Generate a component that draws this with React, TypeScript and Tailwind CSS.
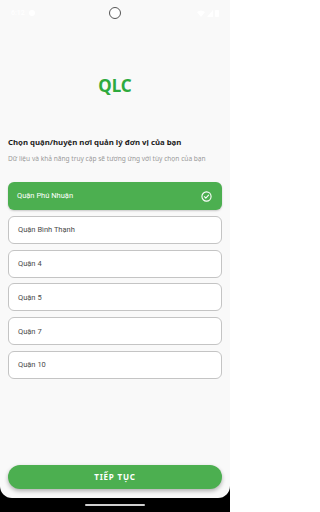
import React from "react";

const districts = ["Quận Phú Nhuận", "Quận Bình Thạnh", "Quận 4", "Quận 5", "Quận 7", "Quận 10"];

export default function App() {
  const selected = 0;
  return (
    <div className="w-[230px] h-[512px] bg-black overflow-hidden" style={{ fontFamily: '"Noto Sans", sans-serif' }}>
      <div className="relative w-[230px] h-[498px] bg-[#f9f9f9] rounded-b-[12px] flex flex-col">
        {/* status bar */}
        <div className="relative h-[26px] flex items-center justify-between px-[11px] text-white">
          <div className="flex items-center gap-[4px] text-[7px] font-medium" style={{ fontFamily: 'Roboto, sans-serif' }}>
            <span>6:12</span>
            <span className="w-[6px] h-[6px] rounded-full bg-white inline-block" />
          </div>
          <div className="absolute left-[109px] top-[7px] w-[12px] h-[12px] rounded-full border border-[#555] bg-white" />
          <div className="flex items-center gap-[2px]">
            <svg width="8" height="7" viewBox="0 0 8 7"><path d="M0 2 Q4 -1 8 2 L4 7 Z" fill="white" /></svg>
            <svg width="6" height="7" viewBox="0 0 6 7"><path d="M0 7 L6 0 L6 7 Z" fill="white" /></svg>
            <div className="w-[4px] h-[7px] bg-white rounded-[1px]" />
          </div>
        </div>

        <div className="h-[44px]" />
        <div className="text-center text-[17px] font-bold text-[#2eaa3e] leading-[32px]">QLC</div>

        <div className="h-[34px]" />
        <div className="px-[8px]">
          <div className="text-[7.8px] font-bold text-[#1c1c1c] leading-[12px]">Chọn quận/huyện nơi quản lý đơn vị của bạn</div>
          <div className="mt-[6px] text-[6.6px] text-[#9a9a9a] leading-[10px] whitespace-nowrap">
            Dữ liệu và khả năng truy cập sẽ tương ứng với tùy chọn của bạn
          </div>
        </div>

        <div className="mt-[18px] px-[8px] flex flex-col gap-[5.8px]">
          {districts.map((d, i) =>
            i === selected ? (
              <div key={d} className="h-[28px] rounded-[6px] bg-[#4caf50] flex items-center justify-between pl-[9px] pr-[10px] shadow-[0_1px_2px_rgba(0,0,0,0.2)]">
                <span className="text-[7.5px] text-white" style={{ fontFamily: 'Roboto, sans-serif' }}>{d}</span>
                <svg width="11" height="11" viewBox="0 0 24 24" fill="none" stroke="white" strokeWidth="2.4" strokeLinecap="round" strokeLinejoin="round">
                  <circle cx="12" cy="12" r="10" />
                  <path d="M7.5 12.5l3 3 6-6.5" />
                </svg>
              </div>
            ) : (
              <div key={d} className="h-[28px] rounded-[6px] bg-white border border-[#c4c4c4] flex items-center pl-[9px]">
                <span className="text-[7.5px] text-[#4a4a4a]" style={{ fontFamily: 'Roboto, sans-serif' }}>{d}</span>
              </div>
            )
          )}
        </div>

        <div className="flex-1" />
        <div className="px-[8px] pb-[9px]">
          <div className="h-[24px] rounded-full bg-[#4caf50] flex items-center justify-center shadow-[0_2px_4px_rgba(0,0,0,0.3)]">
            <span className="text-[8px] font-bold text-white tracking-[0.8px]">TIẾP TỤC</span>
          </div>
        </div>
      </div>
      <div className="h-[14px] flex items-center justify-center">
        <div className="w-[60px] h-[2px] rounded-full bg-[#d0d0d0]" />
      </div>
    </div>
  );
}
